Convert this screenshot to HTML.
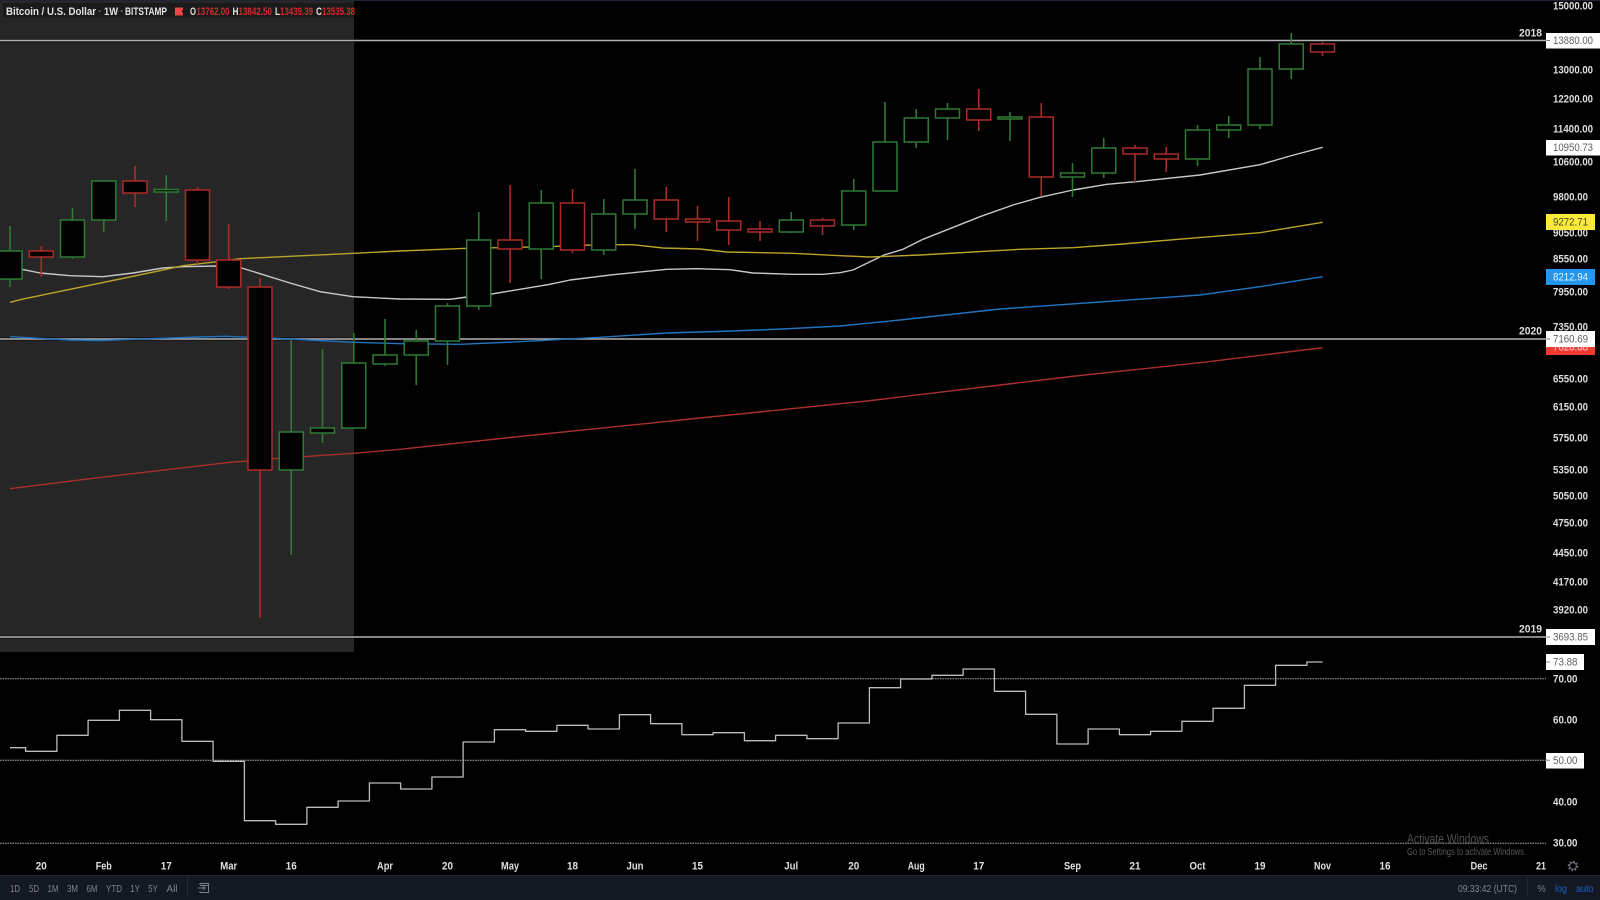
<!DOCTYPE html>
<html>
<head>
<meta charset="utf-8">
<title>Bitcoin / U.S. Dollar 1W</title>
<style>
html,body{margin:0;padding:0;background:#000;width:1600px;height:900px;overflow:hidden}
svg{display:block;position:absolute;left:0;top:0;filter:blur(.3px)}
text{font-family:"Liberation Sans",sans-serif}
.p{font-size:10.8px;font-weight:bold;fill:#dedede;transform:translateY(-.3px)}
.t{font-size:10.8px;font-weight:bold;fill:#e0e0e0;text-anchor:middle;transform:translateY(-.5px)}
.b{font-size:10.8px;fill:#606060;transform:translateY(-.4px)}
.r{font-size:10.5px;fill:#7f838f;text-anchor:middle}
.l{font-size:11px;font-weight:bold;fill:#e2e2e2}
.o{font-size:11px;font-weight:bold;fill:#cf2e2a}
.w{fill:none;stroke-linejoin:round}
</style>
</head>
<body>
<svg width="1600" height="900" viewBox="0 0 1600 900" xmlns="http://www.w3.org/2000/svg">
<rect width="1600" height="900" fill="#000"/>
<rect x="0" y="0" width="1600" height="1" fill="#1e2433"/>
<rect x="0" y="1" width="354" height="651" fill="#262626"/>

<!-- horizontal levels -->
<path d="M0 40.5H1546M0 339H1546M0 637H1546" stroke="#000" stroke-width="3.4" fill="none" opacity=".55"/>
<path d="M0 40.5H1546M0 339H1546M0 637H1546" stroke="#b0b0b0" stroke-width="1.5" fill="none"/>

<!-- RSI levels -->
<path d="M0 678.7H1546M0 760.3H1546M0 843.3H1546" stroke="#a8a8a8" stroke-width="1" stroke-dasharray="1.6 .9" fill="none"/>

<!-- moving averages -->
<path class="w" stroke="#c9c9c9" stroke-width="1.4" d="M22 269.3L40 273L70 275.7L103 276.7L133 273L163 268L183 266.7L217 266L241.7 268L290 283L320 291.7L353 296.7L400 299L450 299.3L467 297L491.7 294L550 284.3L570 280L613 274.7L667 269.3L697 268.7L730 269.7L753 273L793 274.3L823 274.3L840 272.7L853 270L884 255L903 249.3L923 239.3L980 216.7L1013 205L1040 197.3L1073 190L1107 184.3L1140 181.3L1200 175L1260 164.7L1290 156L1322.7 147.3"/>
<path class="w" stroke="#b9a52a" stroke-width="1.4" d="M10 302.3L21.7 299.3L160 270.7L183 265.7L217 261.7L240 258.7L354 253.3L400 251L467 248.3L547 246.7L600 244.7L633 244.7L663 248L700 249L727 252L793 253.3L840 255.7L870 257L920 255L1020 249.3L1073 247.7L1123 244L1190 238.3L1260 232.7L1290 227.7L1322.7 222.3"/>
<path class="w" stroke="#1f74bd" stroke-width="1.4" d="M10 336.7L70 340L100 340.5L200 337L225 336.3L290 339L354 342.3L400 343.7L460 344.3L520 341.7L600 337.3L667 333L733 331L783 329L840 326L900 320L1000 309L1100 302L1200 295L1260 286.7L1322.7 276.7"/>
<path class="w" stroke="#a8302c" stroke-width="1.4" d="M10 488.7L93 478.3L230 462.3L248 461L273 458.7L354 453.3L400 449.3L510 437.5L700 418L867 401L1071 376.5L1200 362.7L1322.7 347.7"/>

<!-- green wicks -->
<path fill="none" stroke="#2f7a33" stroke-width="1.6" d="M10 226V287M72.5 208V259M103.75 180V232M166.25 175V221M291.25 339V555M322.5 349V443M353.75 333V429M385 319V366M416.25 330V385M447.5 303V365M478.75 212V310M541.25 190V279M603.75 199V255M635 169V229M791.25 212V233M853.75 179V230M885 102V191M916.25 109V148M947.5 103V140M1010 112V141M1072.5 163V197M1103.75 138V178M1197.5 125V166M1228.75 116V138M1260 57V129M1291.25 33V79"/>
<!-- red wicks -->
<path fill="none" stroke="#ad2a26" stroke-width="1.6" d="M41.25 246V277M135 166V207M197.5 187V264M228.75 224V289M260 278V618M510 185V283M572.5 189V253M666.25 187V232M697.5 206V241M728.75 197V245M760 221V241M822.5 218V235M978.75 89V131M1041.25 103V196M1135 145V182M1166.25 147V172M1322.5 42V56"/>
<!-- green bodies -->
<path fill="#000" stroke="#2f7a33" stroke-width="1.5" d="M-2 251h24v28h-24zM60.5 220h24v37h-24zM91.75 181h24v39h-24zM154.25 189.5h24v2.5h-24zM279.25 432h24v38h-24zM310.5 428h24v5h-24zM341.75 363h24v65h-24zM373 355h24v9h-24zM404.25 341h24v14h-24zM435.5 306h24v35h-24zM466.75 240h24v66h-24zM529.25 203h24v46h-24zM591.75 214h24v36h-24zM623 200h24v14h-24zM779.25 220h24v12h-24zM841.75 191h24v34h-24zM873 142h24v49h-24zM904.25 118h24v24h-24zM935.5 109h24v9h-24zM998 117h24v2h-24zM1060.5 173h24v4h-24zM1091.75 148h24v25h-24zM1185.5 130h24v29h-24zM1216.75 125h24v5h-24zM1248 69h24v56h-24zM1279.25 44h24v25h-24z"/>
<!-- red bodies -->
<path fill="#000" stroke="#ad2a26" stroke-width="1.5" d="M29.25 251h24v6h-24zM123 181h24v12h-24zM185.5 190h24v70h-24zM216.75 260h24v27h-24zM248 287h24v183h-24zM498 240h24v9h-24zM560.5 203h24v47h-24zM654.25 200h24v19h-24zM685.5 219h24v3h-24zM716.75 221h24v9h-24zM748 229h24v3h-24zM810.5 220h24v6h-24zM966.75 109h24v11h-24zM1029.25 117h24v60h-24zM1123 148h24v6h-24zM1154.25 154h24v5h-24zM1310.5 44h24v8h-24z"/>

<!-- RSI -->
<path class="w" stroke="#bcbcbc" stroke-width="1.3" stroke-linejoin="miter" d="M10 747.7H25.6V751.3H56.9V735.3H88.1V720.3H119.4V710.3H150.6V719.7H181.9V741.3H213.1V761.3H244.4V820.7H275.6V824.3H306.9V807.3H338.1V801H369.4V783H400.6V789H431.9V777H463.1V742H494.4V729.7H525.6V731.3H556.9V725.3H588.1V729H619.4V714.7H650.6V723.7H681.9V734.7H713.1V732.7H744.4V740.7H775.6V735.3H806.9V738.7H838.1V723H869.4V687.7H900.6V679H931.9V675.3H963.1V669H994.4V691.3H1025.6V714.3H1056.9V744H1088.1V729H1119.4V734.7H1150.6V731.3H1181.9V721.3H1213.1V708.3H1244.4V685.3H1275.6V665.3H1306.9V662H1322.5"/>

<!-- legend -->
<rect x="3" y="3" width="351" height="14.5" fill="#1a1a1a"/>
<text class="l" x="6" y="15" textLength="90" lengthAdjust="spacingAndGlyphs">Bitcoin / U.S. Dollar</text>
<text class="l" x="98" y="15" style="fill:#777">·</text>
<text class="l" x="104" y="15" textLength="14" lengthAdjust="spacingAndGlyphs">1W</text>
<text class="l" x="120" y="15" style="fill:#777">·</text>
<text class="l" x="125" y="15" textLength="42" lengthAdjust="spacingAndGlyphs">BITSTAMP</text>
<path d="M175 7.5h8v2.4l-1.6 1.6 1.6 1.6v2.4h-8z" fill="#f0474a"/>
<text class="l" x="190" y="15" textLength="6" lengthAdjust="spacingAndGlyphs">O</text>
<text class="o" x="196.5" y="15" textLength="33" lengthAdjust="spacingAndGlyphs">13762.00</text>
<text class="l" x="232.5" y="15" textLength="6" lengthAdjust="spacingAndGlyphs">H</text>
<text class="o" x="238.5" y="15" textLength="33.5" lengthAdjust="spacingAndGlyphs">13842.50</text>
<text class="l" x="275" y="15" textLength="5" lengthAdjust="spacingAndGlyphs">L</text>
<text class="o" x="280" y="15" textLength="33" lengthAdjust="spacingAndGlyphs">13439.39</text>
<text class="l" x="316" y="15" textLength="6" lengthAdjust="spacingAndGlyphs">C</text>
<text class="o" x="322" y="15" textLength="33" lengthAdjust="spacingAndGlyphs">13535.38</text>

<!-- level annotations -->
<text class="p" x="1519" y="37" textLength="23" lengthAdjust="spacingAndGlyphs">2018</text>
<text class="p" x="1519" y="335" textLength="23" lengthAdjust="spacingAndGlyphs">2020</text>
<text class="p" x="1519" y="633" textLength="23" lengthAdjust="spacingAndGlyphs">2019</text>

<!-- price axis -->
<text class="p" x="1553" y="10" textLength="40" lengthAdjust="spacingAndGlyphs">15000.00</text>
<text class="p" x="1553" y="74" textLength="40" lengthAdjust="spacingAndGlyphs">13000.00</text>
<text class="p" x="1553" y="103" textLength="40" lengthAdjust="spacingAndGlyphs">12200.00</text>
<text class="p" x="1553" y="133" textLength="40" lengthAdjust="spacingAndGlyphs">11400.00</text>
<text class="p" x="1553" y="166" textLength="40" lengthAdjust="spacingAndGlyphs">10600.00</text>
<text class="p" x="1553" y="201" textLength="35" lengthAdjust="spacingAndGlyphs">9800.00</text>
<text class="p" x="1553" y="237" textLength="35" lengthAdjust="spacingAndGlyphs">9050.00</text>
<text class="p" x="1553" y="263" textLength="35" lengthAdjust="spacingAndGlyphs">8550.00</text>
<text class="p" x="1553" y="296" textLength="35" lengthAdjust="spacingAndGlyphs">7950.00</text>
<text class="p" x="1553" y="331" textLength="35" lengthAdjust="spacingAndGlyphs">7350.00</text>
<text class="p" x="1553" y="383" textLength="35" lengthAdjust="spacingAndGlyphs">6550.00</text>
<text class="p" x="1553" y="411" textLength="35" lengthAdjust="spacingAndGlyphs">6150.00</text>
<text class="p" x="1553" y="442" textLength="35" lengthAdjust="spacingAndGlyphs">5750.00</text>
<text class="p" x="1553" y="474" textLength="35" lengthAdjust="spacingAndGlyphs">5350.00</text>
<text class="p" x="1553" y="500" textLength="35" lengthAdjust="spacingAndGlyphs">5050.00</text>
<text class="p" x="1553" y="527" textLength="35" lengthAdjust="spacingAndGlyphs">4750.00</text>
<text class="p" x="1553" y="557" textLength="35" lengthAdjust="spacingAndGlyphs">4450.00</text>
<text class="p" x="1553" y="586" textLength="35" lengthAdjust="spacingAndGlyphs">4170.00</text>
<text class="p" x="1553" y="614" textLength="35" lengthAdjust="spacingAndGlyphs">3920.00</text>
<text class="p" x="1553" y="683" textLength="24.5" lengthAdjust="spacingAndGlyphs">70.00</text>
<text class="p" x="1553" y="724" textLength="24.5" lengthAdjust="spacingAndGlyphs">60.00</text>
<text class="p" x="1553" y="806" textLength="24.5" lengthAdjust="spacingAndGlyphs">40.00</text>
<text class="p" x="1553" y="847" textLength="24.5" lengthAdjust="spacingAndGlyphs">30.00</text>

<!-- price tags -->
<rect x="1546" y="33" width="54" height="15.5" fill="#fff"/>
<text class="b" x="1553" y="44.5" textLength="40" lengthAdjust="spacingAndGlyphs">13880.00</text>
<rect x="1546" y="140" width="54" height="15.5" fill="#fff"/>
<text class="b" x="1553" y="151.5" textLength="40" lengthAdjust="spacingAndGlyphs">10950.73</text>
<rect x="1546" y="214" width="49" height="16" fill="#fbe93c"/>
<text class="b" x="1553" y="226" textLength="35" lengthAdjust="spacingAndGlyphs" style="fill:#4a4a2a">9272.71</text>
<rect x="1546" y="269" width="49" height="16" fill="#2196f3"/>
<text class="b" x="1553" y="281" textLength="35" lengthAdjust="spacingAndGlyphs" style="fill:#e9f5ff">8212.94</text>
<rect x="1546" y="339" width="49" height="16" fill="#f23a33"/>
<text class="b" x="1553" y="351" textLength="35" lengthAdjust="spacingAndGlyphs" style="fill:#ffd5d0">7020.88</text>
<rect x="1546" y="331" width="49" height="16" fill="#fff"/>
<text class="b" x="1553" y="343" textLength="35" lengthAdjust="spacingAndGlyphs">7160.69</text>
<rect x="1546" y="629" width="49" height="16" fill="#fff"/>
<text class="b" x="1553" y="641" textLength="35" lengthAdjust="spacingAndGlyphs">3693.85</text>
<rect x="1546" y="654" width="38" height="16" fill="#fff"/>
<text class="b" x="1553" y="666" textLength="24.5" lengthAdjust="spacingAndGlyphs">73.88</text>
<rect x="1546" y="753" width="38" height="15.5" fill="#fff"/>
<text class="b" x="1553" y="764.5" textLength="24.5" lengthAdjust="spacingAndGlyphs">50.00</text>
<path d="M1546 40.5h4M1546 339h4M1546 637h4M1546 662h4M1546 760.3h4" stroke="#888" stroke-width="1"/>

<!-- time axis -->
<text class="t" x="41.25" y="870" textLength="11" lengthAdjust="spacingAndGlyphs">20</text>
<text class="t" x="103.75" y="870" textLength="16" lengthAdjust="spacingAndGlyphs">Feb</text>
<text class="t" x="166.25" y="870" textLength="11" lengthAdjust="spacingAndGlyphs">17</text>
<text class="t" x="228.75" y="870" textLength="17" lengthAdjust="spacingAndGlyphs">Mar</text>
<text class="t" x="291.25" y="870" textLength="11" lengthAdjust="spacingAndGlyphs">16</text>
<text class="t" x="385" y="870" textLength="16" lengthAdjust="spacingAndGlyphs">Apr</text>
<text class="t" x="447.5" y="870" textLength="11" lengthAdjust="spacingAndGlyphs">20</text>
<text class="t" x="510" y="870" textLength="18" lengthAdjust="spacingAndGlyphs">May</text>
<text class="t" x="572.5" y="870" textLength="11" lengthAdjust="spacingAndGlyphs">18</text>
<text class="t" x="635" y="870" textLength="17" lengthAdjust="spacingAndGlyphs">Jun</text>
<text class="t" x="697.5" y="870" textLength="11" lengthAdjust="spacingAndGlyphs">15</text>
<text class="t" x="791.25" y="870" textLength="14" lengthAdjust="spacingAndGlyphs">Jul</text>
<text class="t" x="853.75" y="870" textLength="11" lengthAdjust="spacingAndGlyphs">20</text>
<text class="t" x="916.25" y="870" textLength="17" lengthAdjust="spacingAndGlyphs">Aug</text>
<text class="t" x="978.75" y="870" textLength="11" lengthAdjust="spacingAndGlyphs">17</text>
<text class="t" x="1072.5" y="870" textLength="17" lengthAdjust="spacingAndGlyphs">Sep</text>
<text class="t" x="1135" y="870" textLength="11" lengthAdjust="spacingAndGlyphs">21</text>
<text class="t" x="1197.5" y="870" textLength="16" lengthAdjust="spacingAndGlyphs">Oct</text>
<text class="t" x="1260" y="870" textLength="11" lengthAdjust="spacingAndGlyphs">19</text>
<text class="t" x="1322.5" y="870" textLength="17" lengthAdjust="spacingAndGlyphs">Nov</text>
<text class="t" x="1385" y="870" textLength="11" lengthAdjust="spacingAndGlyphs">16</text>
<text class="t" x="1479" y="870" textLength="17" lengthAdjust="spacingAndGlyphs">Dec</text>
<text class="t" x="1541" y="870" textLength="10" lengthAdjust="spacingAndGlyphs">21</text>

<!-- gear -->
<circle cx="1573" cy="866" r="3.4" fill="none" stroke="#6f727c" stroke-width="1.1"/>
<circle cx="1573" cy="866" r="4.6" fill="none" stroke="#6f727c" stroke-width="1.4" stroke-dasharray="1.8 1.8"/>

<!-- activate windows -->
<text x="1407" y="843.5" textLength="82" lengthAdjust="spacingAndGlyphs" style="font-size:13.5px;fill:#505050">Activate Windows</text>
<text x="1407" y="855" textLength="119" lengthAdjust="spacingAndGlyphs" style="font-size:10px;fill:#585858">Go to Settings to activate Windows.</text>

<!-- bottom toolbar -->
<rect x="0" y="875" width="1600" height="25" fill="#131823"/>
<rect x="0" y="875" width="1600" height="1" fill="#20252f"/>
<text class="r" x="15" y="892" textLength="10" lengthAdjust="spacingAndGlyphs">1D</text>
<text class="r" x="34" y="892" textLength="10" lengthAdjust="spacingAndGlyphs">5D</text>
<text class="r" x="53" y="892" textLength="11" lengthAdjust="spacingAndGlyphs">1M</text>
<text class="r" x="72.5" y="892" textLength="11" lengthAdjust="spacingAndGlyphs">3M</text>
<text class="r" x="92" y="892" textLength="11" lengthAdjust="spacingAndGlyphs">6M</text>
<text class="r" x="114" y="892" textLength="16" lengthAdjust="spacingAndGlyphs">YTD</text>
<text class="r" x="135" y="892" textLength="9.5" lengthAdjust="spacingAndGlyphs">1Y</text>
<text class="r" x="153" y="892" textLength="9.5" lengthAdjust="spacingAndGlyphs">5Y</text>
<text class="r" x="172" y="892" textLength="11" lengthAdjust="spacingAndGlyphs">All</text>
<rect x="187" y="877" width="1" height="20" fill="#232833"/>
<path d="M200 885V883.5H208.5V892.5H200V891M198 888H205M203 886l2.2 2-2.2 2M200 885.5H208.5" fill="none" stroke="#7a7e8a" stroke-width="1"/>
<text x="1458" y="892" textLength="59" lengthAdjust="spacingAndGlyphs" style="font-size:10.5px;fill:#7f838f">09:33:42 (UTC)</text>
<rect x="1527" y="878" width="1" height="19" fill="#232833"/>
<text class="r" x="1541.5" y="892" textLength="8.5" lengthAdjust="spacingAndGlyphs">%</text>
<text x="1555" y="892" textLength="12" lengthAdjust="spacingAndGlyphs" style="font-size:10.5px;fill:#1d5fc4">log</text>
<text x="1576" y="892" textLength="17.5" lengthAdjust="spacingAndGlyphs" style="font-size:10.5px;fill:#1d5fc4">auto</text>
</svg>
</body>
</html>
